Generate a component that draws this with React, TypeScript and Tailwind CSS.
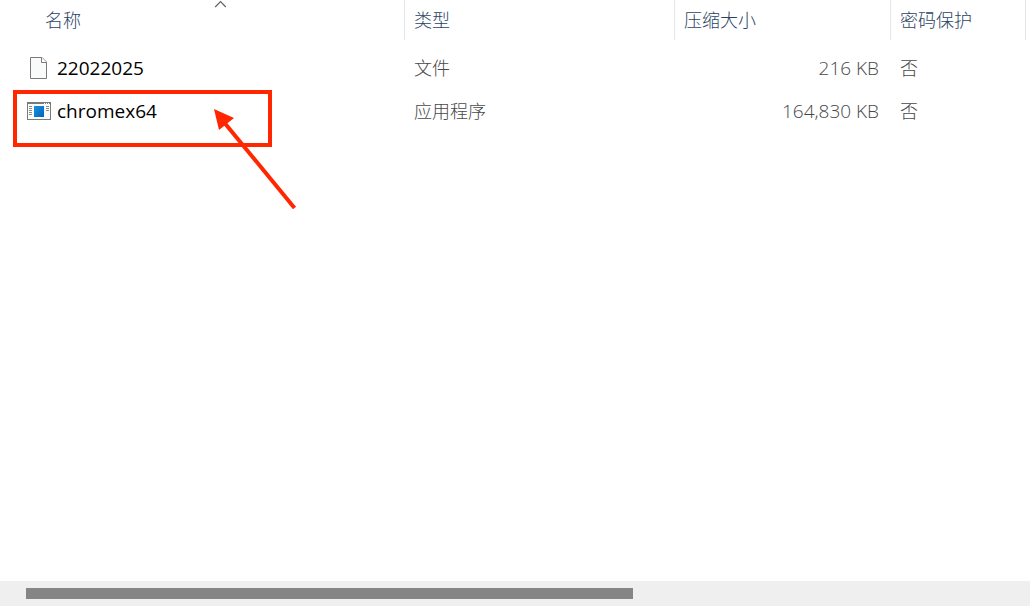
import React from 'react';

interface FileEntry {
  name: string;
  kind: 'file' | 'app';
  type: string;
  size: string;
  encrypted: string;
}

const FILES: FileEntry[] = [
  { name: '22022025', kind: 'file', type: '文件', size: '216 KB', encrypted: '否' },
  { name: 'chromex64', kind: 'app', type: '应用程序', size: '164,830 KB', encrypted: '否' },
];

const FileIcon: React.FC = () => (
  <svg width="24" height="24" viewBox="0 0 24 24" aria-hidden="true">
    <path d="M3.5 1.5h11.5l4.5 4.5v16.5h-16z" fill="#f9fafa" stroke="#7a7a7a" />
    <path d="M14.5 1.5v5h5" fill="#fff" stroke="#7a7a7a" />
  </svg>
);

const AppIcon: React.FC = () => (
  <svg width="24" height="24" viewBox="0 0 24 24" aria-hidden="true">
    <defs>
      <linearGradient id="app-blue" x1="0" y1="0" x2="1" y2="1">
        <stop offset="0" stopColor="#1593e2" />
        <stop offset="1" stopColor="#0564b8" />
      </linearGradient>
    </defs>
    <rect x="0.5" y="3.5" width="23" height="17" fill="#f9fafa" stroke="#7a7a7a" />
    <path d="M0 3h24v2H0z" fill="#7a7a7a" />
    <path d="M17 4.5h1M19 4.5h1M21 4.5h1" stroke="#fff" />
    <path d="M2 7.5h3M2 9.5h3M2 11.5h3M2 13.5h3M2 15.5h3M19 7.5h3M19 9.5h3M19 11.5h3" stroke="#8c8c8c" />
    <rect x="7" y="7" width="10" height="11" fill="url(#app-blue)" />
  </svg>
);

const SortArrow: React.FC = () => (
  <svg className="absolute top-0 left-[214px]" width="13" height="8" viewBox="0 0 13 8" aria-hidden="true">
    <path d="M1.2 7L6.5 1.7L11.8 7" fill="none" stroke="#606060" strokeWidth="1.2" />
  </svg>
);

// Red box and arrow drawn over the executable
const Annotation: React.FC = () => (
  <div className="pointer-events-none absolute left-[13px] top-[90px] h-[57px] w-[259px] border-4 border-[#ff2600]">
    <svg className="absolute left-[195px] top-[13px]" width="90" height="106" viewBox="0 0 90 106" aria-hidden="true">
      <path d="M11 14L82.5 101" stroke="#ff2600" strokeWidth="4" />
      <path d="M2 2L22 11L7 23z" fill="#ff2600" />
    </svg>
  </div>
);

const HEADER_CELL = 'h-10 border-r border-[#e5e5e5] p-0 text-left font-light text-[#2b4264]';

const App: React.FC = () => {
  return (
    <div className="relative flex min-h-screen flex-col bg-white font-['Open_Sans','Noto_Sans_CJK_SC',sans-serif] text-lg leading-6">
      <main className="flex-1">
        <table className="w-full table-fixed border-separate border-spacing-0">
          <colgroup>
            <col className="w-[405px]" />
            <col className="w-[270px]" />
            <col className="w-[216px]" />
            <col className="w-[135px]" />
            <col />
          </colgroup>
          <thead>
            <tr>
              <th className={`relative ${HEADER_CELL}`} aria-sort="ascending">
                <SortArrow />
                <button type="button" className="block w-full pl-[45px] text-left">名称</button>
              </th>
              <th className={HEADER_CELL}>
                <button type="button" className="block w-full pl-[9px] text-left">类型</button>
              </th>
              <th className={HEADER_CELL}>
                <button type="button" className="block w-full pl-[9px] text-left">压缩大小</button>
              </th>
              <th className={HEADER_CELL}>
                <button type="button" className="block w-full pl-[9px] text-left">密码保护</button>
              </th>
              <td />
            </tr>
          </thead>
          <tbody className="font-light text-[#484848] before:block before:h-[6px]">
            {FILES.map((file) => (
              <tr key={file.name} className="h-[43px]">
                <td className="p-0 pl-[27px] text-[19px] font-normal text-black">
                  <div className="flex items-center gap-[6px]">
                    {file.kind === 'file' ? <FileIcon /> : <AppIcon />}
                    <span>{file.name}</span>
                  </div>
                </td>
                <td className="p-0 pl-[9px]">{file.type}</td>
                <td className="p-0 pr-3 text-right text-[19px]">{file.size}</td>
                <td className="p-0 pl-[9px]">{file.encrypted}</td>
                <td />
              </tr>
            ))}
          </tbody>
        </table>
      </main>

      {/* Horizontal scrollbar */}
      <div className="h-[25px] bg-[#efefef] pl-[26px] pt-[7px]">
        <div className="h-[11px] w-[607px] max-w-full bg-[#858585]" />
      </div>

      <Annotation />
    </div>
  );
};

export default App;
